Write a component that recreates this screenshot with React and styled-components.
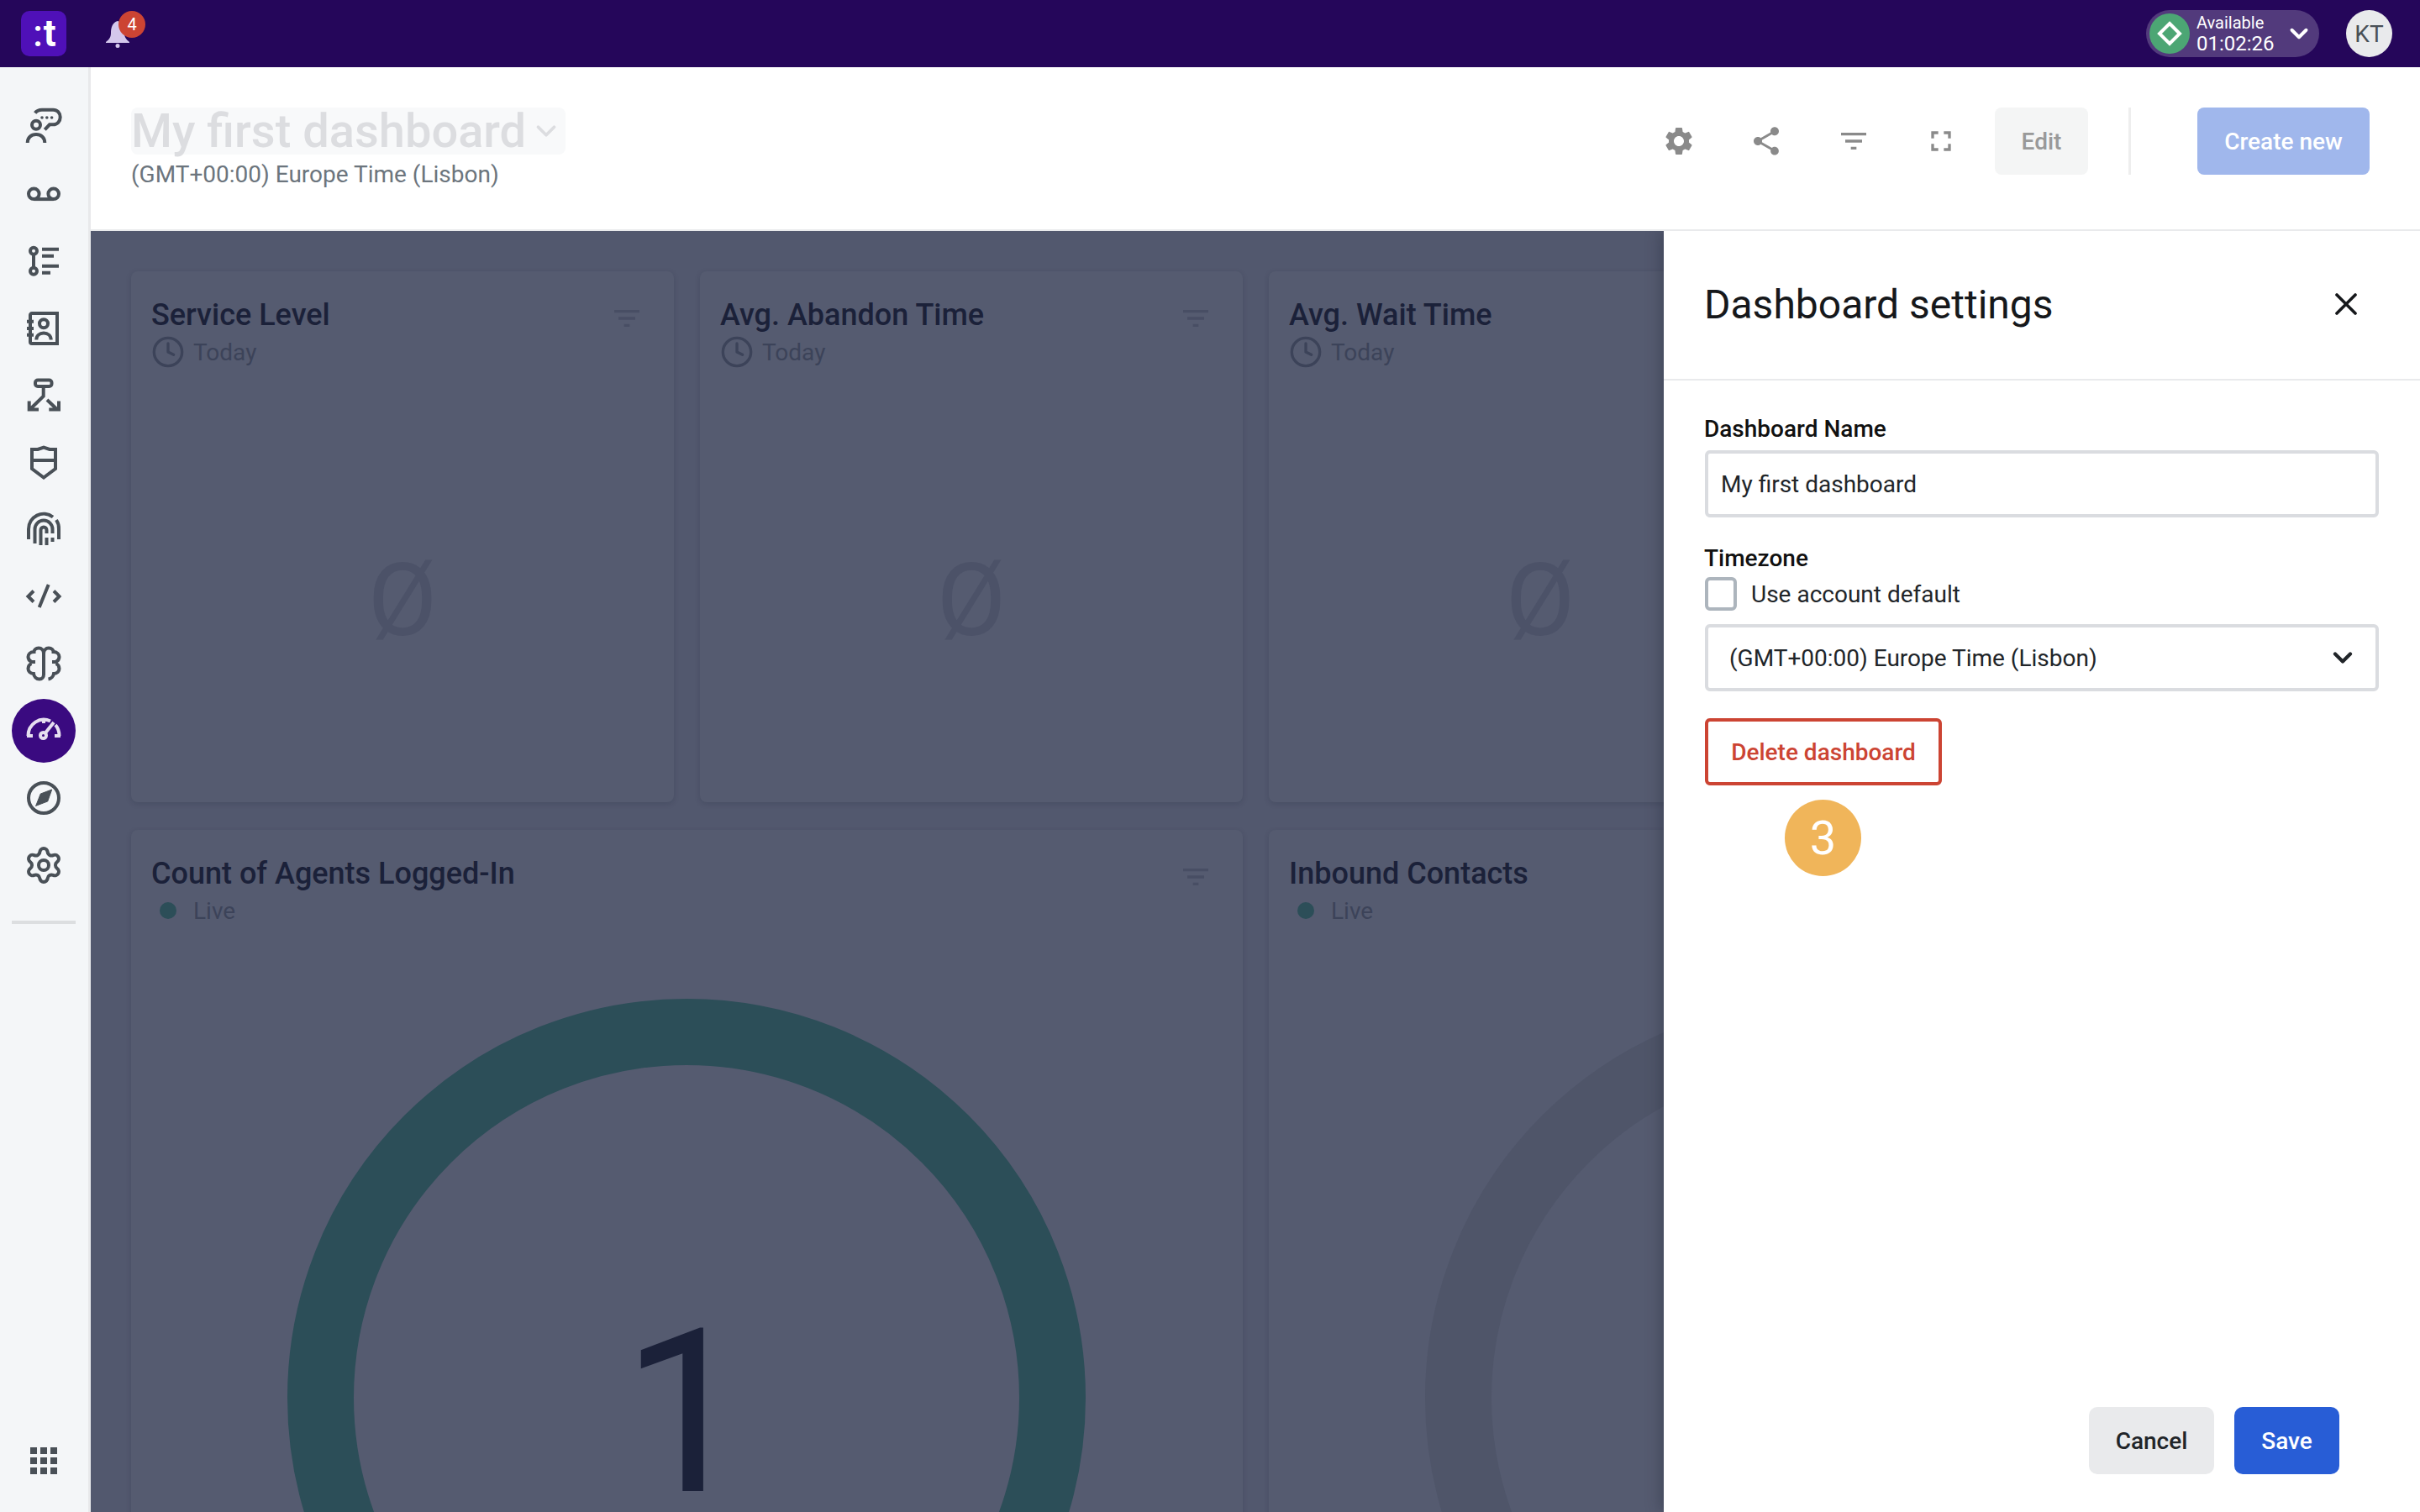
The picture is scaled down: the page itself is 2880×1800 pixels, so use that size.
import styled, { createGlobalStyle } from 'styled-components';
import { ChevronDown, Clock, Settings, X } from 'lucide-react';
import { MdSettings, MdShare, MdFilterList, MdFullscreen } from 'react-icons/md';

const GlobalStyle = createGlobalStyle`
  html, body, #root {
    height: 100%;
    margin: 0;
  }
  body {
    overflow: hidden;
    font-family: Roboto, "Liberation Sans", sans-serif;
    color: #212529;
  }
  * {
    box-sizing: border-box;
  }
`;

const Glyph = styled.svg.attrs({ viewBox: '0 0 48 48', width: 48, height: 48, fill: 'none', stroke: 'currentColor', strokeWidth: 4 })``;

const AgentChatIcon = () => (
  <Glyph>
    <path d="M13.7 8.5C15.5 6 18 4.7 22 4.7H35.3C40 4.7 43.7 8.5 43.7 13.5C43.7 18.5 40 22.3 35.3 22.3H31L25.3 28.3" />
    <circle cx="15" cy="22.7" r="5" />
    <path d="M4.7 44C4.7 38 9 34 15 34S25.3 38 25.3 44" />
    <g fill="currentColor" stroke="none">
      <circle cx="22" cy="14" r="1.8" />
      <circle cx="27.8" cy="14" r="1.8" />
      <circle cx="33.6" cy="14" r="1.8" />
    </g>
  </Glyph>
);

const VoicemailIcon = () => (
  <Glyph>
    <circle cx="12.3" cy="24.8" r="6.3" />
    <circle cx="35.7" cy="24.8" r="6.3" />
    <path d="M12.3 31.1H35.7" />
  </Glyph>
);

const StepsIcon = () => (
  <Glyph>
    <circle cx="12" cy="12.7" r="4" />
    <circle cx="12" cy="36.7" r="4" />
    <path d="M12 16.7V32.7M22 10.7H42M22 18.7H36M22 30.7H42M22 38.7H32" />
  </Glyph>
);

const ContactsIcon = () => (
  <Glyph>
    <path d="M10 7H40V43H10C8.9 43 8 42.1 8 41V9C8 7.9 8.9 7 10 7Z" />
    <path d="M4 16.7H12M4 25H12M4 32.7H12" />
    <circle cx="24" cy="19.3" r="5" />
    <path d="M15.3 38.5C15.3 33.5 19 30.5 24 30.5S32.7 33.5 32.7 38.5" />
  </Glyph>
);

const FlowIcon = () => (
  <Glyph>
    <rect x="14" y="6.5" width="19.5" height="7.5" rx="3" />
    <path d="M23.7 14V25.7L9 40M28 30L39.5 41M6.7 31.5V41.5H18M42 31.5V41.5H30.3" />
  </Glyph>
);

const ShieldIcon = () => (
  <Glyph>
    <path d="M10 9H17L24 6.5L31 9H38V32L24 42.5L10 32Z" />
    <path d="M10 22H38" />
  </Glyph>
);

const FingerprintIcon = () => (
  <Glyph strokeWidth={3.6}>
    <path d="M6 36V24A18 18 0 0 1 35 9.5M39 13A18 18 0 0 1 42 24V36" />
    <path d="M13.5 41V24A10.5 10.5 0 0 1 34.5 24V29" />
    <path d="M20.5 43V25A3.5 3.5 0 0 1 27.5 25V29M27.5 34V43M34.5 34V39" />
  </Glyph>
);

const CodeIcon = () => (
  <Glyph>
    <path d="M12 17.5L5.5 24L12 30.5M36 17.5L42.5 24L36 30.5M29.7 10L18.7 37" />
  </Glyph>
);

const BrainIcon = () => (
  <Glyph strokeWidth={3.6}>
    <path d="M24 12C24 8 21.5 5.5 18 5.5C14.5 5.5 12.5 8 12.5 10C8 10 5.5 13 5.5 16C5.5 19 7.5 21 9.5 22H14" />
    <path d="M9.5 24C7 25 5.5 27.5 5.5 30C5.5 33 8 36 12 36C12.5 39.5 15 42.5 19 42.5C22 42.5 24 40 24 37V12" />
    <path d="M24 12C24 8 26.5 5.5 30 5.5C33.5 5.5 35.5 8 35.5 10C40 10 42.5 13 42.5 16C42.5 19 40.5 21 38.5 22H34" />
    <path d="M38.5 24C41 25 42.5 27.5 42.5 30C42.5 33 40 36 36 36C35.5 39 33 42 29.5 42.5" />
  </Glyph>
);

const GaugeIcon = () => (
  <Glyph>
    <path d="M5.5 30A18.5 19.5 0 0 1 32 12.5M38 17A18.5 19.5 0 0 1 42.5 30M4 30H11M37 30H44M24 10V15M26 26.5L36 14" />
    <circle cx="23.5" cy="29.5" r="3.5" />
  </Glyph>
);

const CompassIcon = () => (
  <Glyph>
    <circle cx="24" cy="24" r="18" />
    <path d="M33.7 14L14.7 33.3L20.3 19ZM33.7 14L28.7 28L14.7 33.3Z" fill="currentColor" strokeWidth="1" />
  </Glyph>
);

const AppsIcon = () => (
  <svg width="32" height="32" viewBox="0 0 32 32" fill="currentColor">
    {[0, 12, 24].map((y) => [0, 12, 24].map((x) => <rect key={`${x}-${y}`} x={x} y={y} width="8" height="8" />))}
  </svg>
);

const BellIcon = () => (
  <svg width="28" height="32" viewBox="0 0 28 32" fill="currentColor">
    <path d="M14 0C8 1.5 6 8 6 14C6 19 4 22 0 25V26H28V25C24 22 22 19 22 14C22 8 20 1.5 14 0Z" />
    <circle cx="14" cy="29.5" r="2.5" />
  </svg>
);

const DiamondIcon = () => (
  <svg width="30" height="30" viewBox="0 0 30 30" fill="none" stroke="#fff" strokeWidth="4">
    <path d="M15 3L27 15L15 27L3 15Z" />
  </svg>
);

const navItems = [
  { icon: AgentChatIcon },
  { icon: VoicemailIcon },
  { icon: StepsIcon },
  { icon: ContactsIcon },
  { icon: FlowIcon },
  { icon: ShieldIcon },
  { icon: FingerprintIcon },
  { icon: CodeIcon },
  { icon: BrainIcon },
  { icon: GaugeIcon, active: true },
  { icon: CompassIcon },
  { icon: () => <Settings size={48} strokeWidth={2} /> },
];

function Card({ title, live, children }) {
  return (
    <CardBox>
      <CardHead>
        <CardTitle>{title}</CardTitle>
        <CardFilter><MdFilterList size={40} /></CardFilter>
      </CardHead>
      <CardSub>
        <SubIcon>{live ? <LiveDot /> : <Clock size={40} strokeWidth={2} />}</SubIcon>
        {live ? 'Live' : 'Today'}
      </CardSub>
      {children}
    </CardBox>
  );
}

function Gauge({ color, value }) {
  return (
    <GaugeWrap>
      <svg width="950" height="950" viewBox="0 0 950 950" fill="none">
        <circle cx="475" cy="475" r="435.5" stroke={color} strokeWidth="79" />
      </svg>
      {value && <GaugeValue>{value}</GaugeValue>}
    </GaugeWrap>
  );
}

function App() {
  return (
    <Page>
      <GlobalStyle />
      <TopBar>
        <Logo><LogoColon>:</LogoColon>t</Logo>
        <BellWrap>
          <BellIcon />
          <BellBadge>4</BellBadge>
        </BellWrap>
        <TopRight>
          <StatusPill>
            <StatusDot><DiamondIcon /></StatusDot>
            <StatusText>
              <StatusName>Available</StatusName>
              <StatusTime>01:02:26</StatusTime>
            </StatusText>
            <ChevronDown size={34} strokeWidth={2.8} />
          </StatusPill>
          <Avatar>KT</Avatar>
        </TopRight>
      </TopBar>

      <Body>
        <Sidebar>
          {navItems.map((item, i) => (
            <NavItem key={i} $active={item.active}><item.icon /></NavItem>
          ))}
          <NavDivider />
          <AppsButton><AppsIcon /></AppsButton>
        </Sidebar>

        <Main>
          <Header>
            <div>
              <TitleBox>
                <PageTitle>My first dashboard</PageTitle>
                <ChevronDown size={38} strokeWidth={2.4} />
              </TitleBox>
              <TimezoneNote>(GMT+00:00) Europe Time (Lisbon)</TimezoneNote>
            </div>
            <Toolbar>
              <ToolIcon><MdSettings size={40} /></ToolIcon>
              <ToolIcon><MdShare size={40} /></ToolIcon>
              <ToolIcon><MdFilterList size={40} /></ToolIcon>
              <ToolIcon><MdFullscreen size={40} /></ToolIcon>
              <EditButton>Edit</EditButton>
              <ToolDivider />
              <CreateButton>Create new</CreateButton>
            </Toolbar>
          </Header>

          <Workspace>
            <Dashboard>
              <Card title="Service Level"><EmptyValue>Ø</EmptyValue></Card>
              <Card title="Avg. Abandon Time"><EmptyValue>Ø</EmptyValue></Card>
              <Card title="Avg. Wait Time"><EmptyValue>Ø</EmptyValue></Card>
              <Spacer />
              <WideCard>
                <Card title="Count of Agents Logged-In" live>
                  <Gauge color="#2c4e58" value="1" />
                </Card>
              </WideCard>
              <WideCard>
                <Card title="Inbound Contacts" live>
                  <Gauge color="#4f5569" />
                </Card>
              </WideCard>
            </Dashboard>

            <Panel>
              <PanelHead>
                <PanelTitle>Dashboard settings</PanelTitle>
                <CloseButton><X size={44} strokeWidth={2} /></CloseButton>
              </PanelHead>
              <PanelBody>
                <FieldLabel>Dashboard Name</FieldLabel>
                <NameInput defaultValue="My first dashboard" />
                <TimezoneLabel>Timezone</TimezoneLabel>
                <CheckRow>
                  <CheckBox type="checkbox" />
                  Use account default
                </CheckRow>
                <SelectBox>
                  (GMT+00:00) Europe Time (Lisbon)
                  <ChevronDown size={36} strokeWidth={2.8} />
                </SelectBox>
                <DeleteWrap>
                  <DeleteButton>Delete dashboard</DeleteButton>
                  <StepBadge>3</StepBadge>
                </DeleteWrap>
              </PanelBody>
              <PanelFoot>
                <CancelButton>Cancel</CancelButton>
                <SaveButton>Save</SaveButton>
              </PanelFoot>
            </Panel>
          </Workspace>
        </Main>
      </Body>
    </Page>
  );
}

export default App;

const Page = styled.div`
  height: 100%;
  display: flex;
  flex-direction: column;
`;

const TopBar = styled.header`
  flex: none;
  height: 80px;
  display: flex;
  align-items: center;
  padding: 0 33px 0 25px;
  background-color: #25065a;
`;

const Logo = styled.div`
  width: 54px;
  height: 54px;
  display: flex;
  align-items: center;
  justify-content: center;
  padding-left: 2px;
  border-radius: 10px;
  background-color: #4f10b8;
  color: #fff;
  font-size: 44px;
  font-weight: 700;
  line-height: 1;
`;

const LogoColon = styled.span`
  margin-right: 1px;
  font-weight: 500;
`;

const BellWrap = styled.div`
  position: relative;
  display: flex;
  margin-left: 47px;
  margin-top: 2px;
  color: #d4c7ec;
`;

const BellBadge = styled.span`
  position: absolute;
  top: -12px;
  left: 15px;
  width: 32px;
  height: 32px;
  display: flex;
  align-items: center;
  justify-content: center;
  border-radius: 50%;
  background-color: #cc4433;
  color: #fff;
  font-size: 20px;
`;

const TopRight = styled.div`
  margin-left: auto;
  display: flex;
  align-items: center;
  gap: 32px;
`;

const StatusPill = styled.div`
  width: 206px;
  height: 56px;
  display: flex;
  align-items: center;
  padding: 0 4px;
  border-radius: 28px;
  background-color: #523a7c;
  color: #fff;
`;

const StatusDot = styled.div`
  flex: none;
  width: 48px;
  height: 48px;
  display: flex;
  align-items: center;
  justify-content: center;
  border-radius: 50%;
  background-color: #4ca674;
`;

const StatusText = styled.div`
  width: 105px;
  margin-left: 8px;
`;

const StatusName = styled.div`
  font-size: 20px;
  line-height: 24px;
`;

const StatusTime = styled.div`
  font-size: 24px;
  line-height: 26px;
`;

const Avatar = styled.div`
  width: 55px;
  height: 56px;
  display: flex;
  align-items: center;
  justify-content: center;
  border-radius: 50%;
  background-color: #e9eaec;
  color: #495057;
  font-size: 28px;
`;

const Body = styled.div`
  flex: 1;
  min-height: 0;
  display: flex;
`;

const Sidebar = styled.nav`
  flex: none;
  width: 108px;
  display: flex;
  flex-direction: column;
  align-items: center;
  gap: 4px;
  padding: 32px 1px 45px 0;
  border-right: 3px solid #e8e9eb;
  background-color: #f4f6f8;
  color: #495057;
`;

const NavItem = styled.div`
  flex: none;
  width: 76px;
  height: 76px;
  display: flex;
  align-items: center;
  justify-content: center;
  border-radius: 50%;
  background-color: ${(p) => (p.$active ? '#3a0a80' : 'transparent')};
  color: ${(p) => (p.$active ? '#e6dff0' : '#495057')};
`;

const NavDivider = styled.div`
  flex: none;
  width: 76px;
  height: 4px;
  margin-top: 24px;
  background-color: #dcdee0;
`;

const AppsButton = styled.div`
  margin-top: auto;
  display: flex;
`;

const Main = styled.main`
  flex: 1;
  min-width: 0;
  display: flex;
  flex-direction: column;
`;

const Header = styled.div`
  flex: none;
  height: 195px;
  display: flex;
  align-items: flex-start;
  justify-content: space-between;
  padding: 48px 60px 0 48px;
  border-bottom: 2px solid #e9eaec;
  background-color: #fff;
`;

const TitleBox = styled.div`
  width: 517px;
  height: 56px;
  display: flex;
  align-items: center;
  justify-content: space-between;
  padding-right: 4px;
  border-radius: 8px;
  background-color: #f8f9fa;
  color: #dcdde0;
`;

const PageTitle = styled.h1`
  margin: 0;
  font-size: 56px;
  font-weight: 500;
  line-height: 56px;
  white-space: nowrap;
`;

const TimezoneNote = styled.div`
  margin-top: 6px;
  font-size: 28px;
  line-height: 36px;
  color: #6c757d;
`;

const Toolbar = styled.div`
  display: flex;
  align-items: center;
  height: 80px;
`;

const ToolIcon = styled.div`
  width: 104px;
  display: flex;
  justify-content: center;
  color: #8a8a8a;
`;

const EditButton = styled.button`
  width: 111px;
  height: 80px;
  margin-left: 12px;
  border: 0;
  border-radius: 8px;
  background-color: #f4f5f5;
  color: #999;
  font: 500 28px Roboto, sans-serif;
`;

const ToolDivider = styled.div`
  width: 3px;
  height: 80px;
  margin: 0 79px 0 48px;
  background-color: #eee;
`;

const CreateButton = styled.button`
  width: 205px;
  height: 80px;
  border: 0;
  border-radius: 8px;
  background-color: #a0b7ec;
  color: #fff;
  font: 500 28px Roboto, sans-serif;
`;

const Workspace = styled.div`
  flex: 1;
  min-height: 0;
  display: flex;
  overflow: hidden;
`;

const Dashboard = styled.div`
  flex: 1;
  min-width: 0;
  overflow: hidden;
  display: grid;
  grid-template-columns: repeat(4, 646px);
  grid-template-rows: 632px 1100px;
  column-gap: 31px;
  row-gap: 33px;
  padding: 48px;
  background-color: #52586e;
`;

const Spacer = styled.div``;

const WideCard = styled.div`
  display: flex;
  grid-column: span 2;
`;

const CardBox = styled.section`
  flex: 1;
  min-width: 0;
  display: flex;
  flex-direction: column;
  padding: 30px 36px 0 24px;
  border-radius: 8px;
  background-color: #555b70;
  box-shadow: 0 2px 6px rgba(30, 35, 55, 0.18);
`;

const CardHead = styled.div`
  display: flex;
  align-items: flex-start;
  justify-content: space-between;
`;

const CardTitle = styled.h2`
  margin: 0;
  font-size: 36px;
  font-weight: 500;
  line-height: 44px;
  color: #1b2139;
`;

const CardFilter = styled.div`
  display: flex;
  margin-top: 6px;
  color: #484e64;
`;

const CardSub = styled.div`
  display: flex;
  align-items: center;
  height: 40px;
  font-size: 28px;
  color: #3c4359;
`;

const SubIcon = styled.div`
  width: 40px;
  height: 40px;
  display: flex;
  align-items: center;
  justify-content: center;
  margin-right: 10px;
`;

const LiveDot = styled.span`
  width: 20px;
  height: 20px;
  border-radius: 50%;
  background-color: #2c4e58;
`;

const EmptyValue = styled.div`
  flex: 1;
  display: flex;
  align-items: center;
  justify-content: center;
  margin-left: 12px;
  padding-top: 36px;
  font-size: 120px;
  font-weight: 400;
  color: #4c5268;
`;

const GaugeWrap = styled.div`
  position: relative;
  align-self: center;
  display: flex;
  margin-top: 85px;
  margin-left: 10px;
`;

const GaugeValue = styled.div`
  position: absolute;
  inset: 0;
  display: flex;
  align-items: center;
  justify-content: center;
  padding-top: 38px;
  font-size: 272px;
  font-weight: 400;
  line-height: 0.72;
  color: #1b2139;
`;

const Panel = styled.aside`
  position: relative;
  flex: none;
  width: 900px;
  display: flex;
  flex-direction: column;
  background-color: #fff;
  box-shadow: -4px 0 16px rgba(40, 44, 60, 0.4);
`;

const PanelHead = styled.div`
  flex: none;
  height: 178px;
  display: flex;
  align-items: center;
  justify-content: space-between;
  padding: 0 66px 2px 48px;
  border-bottom: 2px solid #e9eaec;
`;

const PanelTitle = styled.h2`
  margin: 0;
  font-size: 48px;
  font-weight: 400;
  color: #16181b;
`;

const CloseButton = styled.div`
  display: flex;
  color: #16181b;
`;

const PanelBody = styled.div`
  display: flex;
  flex-direction: column;
  padding: 40px 49px 0;
`;

const FieldLabel = styled.label`
  font-size: 28px;
  font-weight: 500;
  line-height: 36px;
  margin-left: -1px;
  color: #111;
`;

const TimezoneLabel = styled(FieldLabel)`
  margin-top: 31px;
`;

const NameInput = styled.input`
  height: 80px;
  margin-top: 7px;
  padding: 0 15px;
  border: 4px solid #dadce0;
  border-radius: 6px;
  outline: none;
  color: #212529;
  font: 400 28px Roboto, sans-serif;
`;

const CheckRow = styled.label`
  display: flex;
  align-items: center;
  height: 40px;
  margin-top: 4px;
  font-size: 28px;
  color: #212529;
`;

const CheckBox = styled.input`
  appearance: none;
  width: 38px;
  height: 40px;
  margin: 0 17px 0 0;
  border: 4px solid #adb5bd;
  border-radius: 6px;
  background-color: #fff;
`;

const SelectBox = styled.div`
  height: 80px;
  display: flex;
  align-items: center;
  justify-content: space-between;
  margin-top: 16px;
  padding: 0 21px 0 25px;
  border: 4px solid #dadce0;
  border-radius: 6px;
  font-size: 28px;
  color: #212529;
`;

const DeleteWrap = styled.div`
  position: relative;
  align-self: flex-start;
  margin-top: 32px;
`;

const DeleteButton = styled.button`
  width: 282px;
  height: 80px;
  border: 4px solid #cc4433;
  border-radius: 6px;
  background-color: #fff;
  color: #cc4433;
  font: 500 28px Roboto, sans-serif;
`;

const StepBadge = styled.div`
  position: absolute;
  top: 97px;
  left: 95px;
  width: 91px;
  height: 91px;
  display: flex;
  align-items: center;
  justify-content: center;
  border-radius: 50%;
  background-color: #f0b55a;
  color: #fff;
  font-size: 56px;
`;

const PanelFoot = styled.div`
  margin-top: auto;
  display: flex;
  justify-content: flex-end;
  gap: 24px;
  padding: 0 96px 45px 0;
`;

const CancelButton = styled.button`
  width: 149px;
  height: 80px;
  border: 0;
  border-radius: 10px;
  background-color: #e9eaec;
  color: #212529;
  font: 500 28px Roboto, sans-serif;
`;

const SaveButton = styled.button`
  width: 125px;
  height: 80px;
  border: 0;
  border-radius: 10px;
  background-color: #285dd6;
  color: #fff;
  font: 500 28px Roboto, sans-serif;
`;
